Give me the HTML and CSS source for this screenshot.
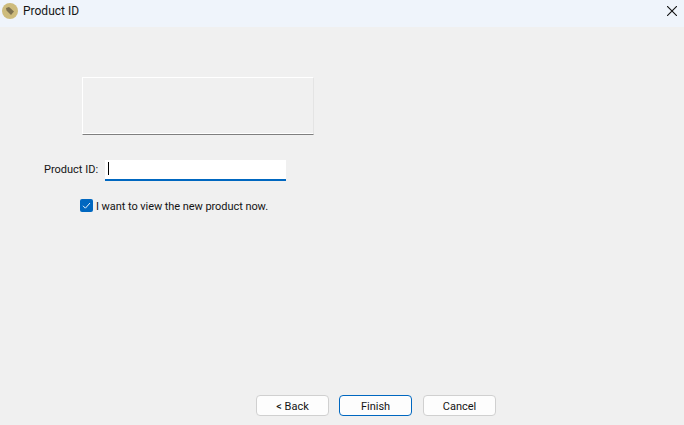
FILE: index.html
```html
<!DOCTYPE html>
<html lang="en">
<head>
<meta charset="utf-8">
<title>Product ID</title>
<link rel="stylesheet" href="styles.css">
</head>
<body>
<div class="window">
  <header class="titlebar">
    <svg class="app-icon" width="16" height="16" viewBox="0 0 16 16">
      <circle cx="8" cy="8" r="8" fill="#cdbb7c"/>
      <path d="M4 5 L7 4 L12 8.5 L9 12 L4.5 7.5 Z" fill="#7d7150"/>
    </svg>
    <span class="title">Product ID</span>
    <svg class="close" width="10" height="10" viewBox="0 0 10 10">
      <path d="M0 0 L10 10 M10 0 L0 10" stroke="#111" stroke-width="1.1" fill="none"/>
    </svg>
  </header>
  <main class="content">
    <div class="panel"></div>
    <div class="id-row">
      <label class="id-label">Product ID:</label>
      <div class="input"><span class="caret"></span></div>
    </div>
    <div class="check-row">
      <span class="checkbox">
        <svg width="13" height="13" viewBox="0 0 13 13">
          <path d="M3 6.8 L5.4 9.2 L10 4" stroke="#e8f1fa" stroke-width="1" fill="none"/>
        </svg>
      </span>
      <span class="check-label">I want to view the new product now.</span>
    </div>
  </main>
  <footer class="buttons">
    <button class="btn">&lt; Back</button>
    <button class="btn primary">Finish</button>
    <button class="btn cancel">Cancel</button>
  </footer>
</div>
</body>
</html>
```
FILE: styles.css
```css
html, body {
  margin: 0;
  padding: 0;
}
body {
  background: #f0f0f0;
  font-family: "Roboto", "Liberation Sans", sans-serif;
  font-size: 11px;
  color: #141414;
}
.window {
  width: 684px;
  height: 425px;
  display: flex;
  flex-direction: column;
  overflow: hidden;
}
.titlebar {
  height: 27px;
  flex: none;
  background: #eff4fb;
  display: flex;
  align-items: center;
  padding: 0 7px 5px 2px;
  box-sizing: border-box;
}
.app-icon {
  flex: none;
}
.title {
  margin-left: 5px;
  font-size: 12px;
  flex: 1;
}
.close {
  flex: none;
}
.content {
  flex: 1;
  display: flex;
  flex-direction: column;
  padding-top: 50px;
}
.panel {
  box-sizing: border-box;
  width: 232px;
  height: 58px;
  margin-left: 82px;
  background: #f0f0f0;
  border: 1px solid #fff;
  border-right-color: #e4e4e4;
  border-bottom: 1px solid #7f7f7f;
  box-shadow: inset 0 -1px 0 #fff;
}
.id-row {
  display: flex;
  align-items: center;
  margin-top: 25px;
  margin-left: 44px;
  height: 21px;
}
.id-label {
  width: 61px;
  flex: none;
  white-space: nowrap;
  padding-bottom: 2px;
}
.input {
  box-sizing: border-box;
  width: 181px;
  height: 21px;
  background: #fff;
  border-bottom: 2px solid #0067c0;
  padding: 2px 0 0 3px;
}
.caret {
  display: block;
  width: 1px;
  height: 13px;
  background: #000;
}
.check-row {
  display: flex;
  align-items: center;
  margin-top: 17px;
  margin-left: 80px;
  height: 14px;
}
.checkbox {
  box-sizing: border-box;
  width: 13px;
  height: 13px;
  background: #0067c0;
  border-radius: 2px;
  flex: none;
  display: flex;
}
.check-label {
  margin-left: 3px;
  white-space: nowrap;
  padding-top: 2px;
  letter-spacing: -0.06px;
}
.buttons {
  flex: none;
  display: flex;
  gap: 10px;
  padding-left: 256px;
  padding-bottom: 9px;
}
.btn {
  box-sizing: border-box;
  width: 73px;
  height: 21px;
  padding: 1px 0 0;
  background: #fdfdfd;
  border: 1px solid #d0d0d0;
  border-radius: 4px;
  font-family: inherit;
  font-size: 11px;
  color: #141414;
}
.primary {
  border-color: #0067c0;
}
.cancel {
  margin-left: 1px;
}
```
